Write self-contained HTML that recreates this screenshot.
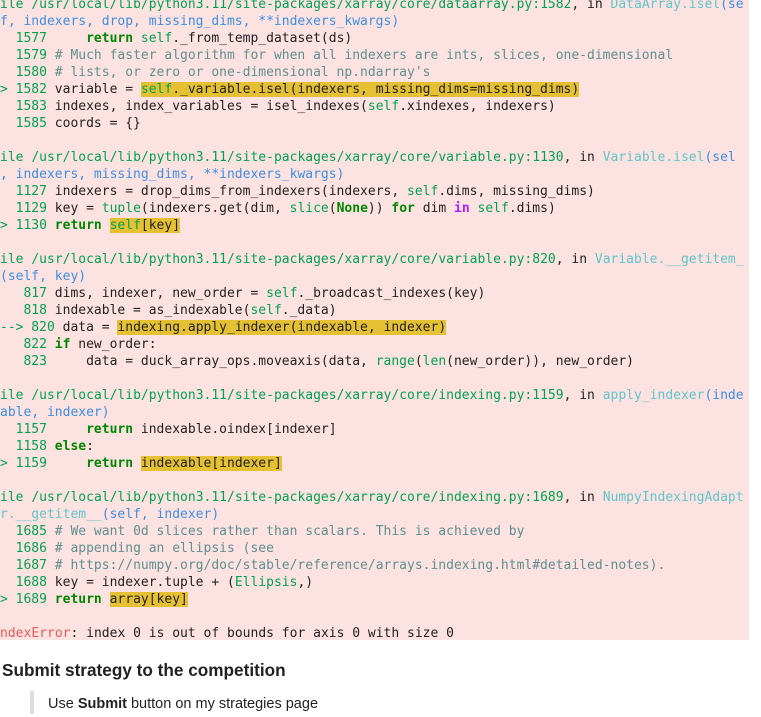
<!DOCTYPE html>
<html><head><meta charset="utf-8"><style>
body{margin:0;background:#fff;width:761px;height:717px;overflow:hidden;position:relative}
pre{position:absolute;left:0;top:-4px;width:749px;height:644px;margin:0;background:#fde2e2;font-family:"DejaVu Sans Mono","Liberation Mono",monospace;font-size:13px;line-height:17px;color:#222;overflow:hidden;white-space:pre}
.g{color:#00a250}.n{color:#00a250}.k{color:#008700;font-weight:bold}.c{color:#5f8f8f}.cy{color:#60c6c8}.b{color:#3d8fe0}.p{color:#aa22ff;font-weight:bold}.r{color:#e75c58}
.h{background:#e5c032}
.f{margin-left:-7.8px}
h3{position:absolute;left:2px;top:660px;margin:0;font:bold 17.2px "Liberation Sans",sans-serif;color:#222}
.q{position:absolute;left:30px;top:691px;width:4px;height:23px;background:#ddd}
.qt{position:absolute;left:48px;top:696px;font:14.5px "Liberation Sans",sans-serif;color:#222}
</style></head><body>
<pre><span class="f"><span class="g">File /usr/local/lib/python3.11/site-packages/xarray/core/dataarray.py:1582</span>, in <span class="cy">DataArray.isel</span><span class="b">(se</span></span>
<span class="b">f, indexers, drop, missing_dims, **indexers_kwargs)</span>
<span class="n">  1577</span>     <span class="k">return</span> <span class="g">self</span>._from_temp_dataset(ds)
<span class="n">  1579</span> <span class="c"># Much faster algorithm for when all indexers are ints, slices, one-dimensional</span>
<span class="n">  1580</span> <span class="c"># lists, or zero or one-dimensional np.ndarray's</span>
<span class="n">&gt; 1582</span> variable = <span class="h"><span class="g">self</span>._variable.isel(indexers, missing_dims=missing_dims)</span>
<span class="n">  1583</span> indexes, index_variables = isel_indexes(<span class="g">self</span>.xindexes, indexers)
<span class="n">  1585</span> coords = {}

<span class="f"><span class="g">File /usr/local/lib/python3.11/site-packages/xarray/core/variable.py:1130</span>, in <span class="cy">Variable.isel</span><span class="b">(sel</span></span>
<span class="b">, indexers, missing_dims, **indexers_kwargs)</span>
<span class="n">  1127</span> indexers = drop_dims_from_indexers(indexers, <span class="g">self</span>.dims, missing_dims)
<span class="n">  1129</span> key = <span class="g">tuple</span>(indexers.get(dim, <span class="g">slice</span>(<span class="k">None</span>)) <span class="k">for</span> dim <span class="p">in</span> <span class="g">self</span>.dims)
<span class="n">&gt; 1130</span> <span class="k">return</span> <span class="h"><span class="g">self</span>[key]</span>

<span class="f"><span class="g">File /usr/local/lib/python3.11/site-packages/xarray/core/variable.py:820</span>, in <span class="cy">Variable.__getitem_</span></span>
<span class="b">(self, key)</span>
<span class="n">   817</span> dims, indexer, new_order = <span class="g">self</span>._broadcast_indexes(key)
<span class="n">   818</span> indexable = as_indexable(<span class="g">self</span>._data)
<span class="n">--&gt; 820</span> data = <span class="h">indexing.apply_indexer(indexable, indexer)</span>
<span class="n">   822</span> <span class="k">if</span> new_order:
<span class="n">   823</span>     data = duck_array_ops.moveaxis(data, <span class="g">range</span>(<span class="g">len</span>(new_order)), new_order)

<span class="f"><span class="g">File /usr/local/lib/python3.11/site-packages/xarray/core/indexing.py:1159</span>, in <span class="cy">apply_indexer</span><span class="b">(inde</span></span>
<span class="b">able, indexer)</span>
<span class="n">  1157</span>     <span class="k">return</span> indexable.oindex[indexer]
<span class="n">  1158</span> <span class="k">else</span>:
<span class="n">&gt; 1159</span>     <span class="k">return</span> <span class="h">indexable[indexer]</span>

<span class="f"><span class="g">File /usr/local/lib/python3.11/site-packages/xarray/core/indexing.py:1689</span>, in <span class="cy">NumpyIndexingAdapt</span></span>
<span class="cy">r.__getitem__</span><span class="b">(self, indexer)</span>
<span class="n">  1685</span> <span class="c"># We want 0d slices rather than scalars. This is achieved by</span>
<span class="n">  1686</span> <span class="c"># appending an ellipsis (see</span>
<span class="n">  1687</span> <span class="c"># https://numpy.org/doc/stable/reference/arrays.indexing.html#detailed-notes).</span>
<span class="n">  1688</span> key = indexer.tuple + (<span class="g">Ellipsis</span>,)
<span class="n">&gt; 1689</span> <span class="k">return</span> <span class="h">array[key]</span>

<span class="f"><span class="r">IndexError</span>: index 0 is out of bounds for axis 0 with size 0</span></pre>
<h3>Submit strategy to the competition</h3>
<div class="q"></div>
<div class="qt">Use <b>Submit</b> button on my strategies page</div>
</body></html>
